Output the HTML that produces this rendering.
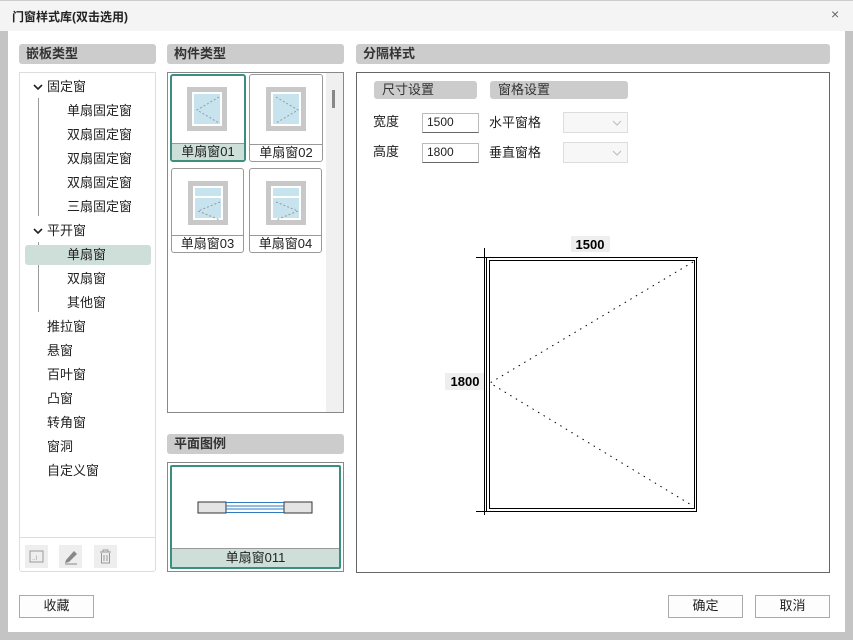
<!DOCTYPE html>
<html><head><meta charset="utf-8"><style>
*{margin:0;padding:0;box-sizing:border-box}
body{width:853px;height:640px;position:relative;background:#c4c4c4;font-family:"Liberation Sans","Noto Sans CJK SC",sans-serif;font-size:13px;color:#222;overflow:hidden}
.a{position:absolute}
.hd{position:absolute;background:#ccc;border-radius:3px;font-weight:bold;font-size:13px;padding-left:7px;line-height:20px;color:#333}
.tr{position:absolute;font-size:13px;line-height:16px;color:#222}
.item{position:absolute;border:1px solid #999;border-radius:3px;background:#fff}
.fr{position:absolute;left:16px;top:12px;width:40px;height:44px;background:#c8c8c8;padding:5px}
.fr i{display:block;width:100%;height:100%;border:2px solid #fff;background:#c7e4ee}
.lb{position:absolute;left:0;right:0;bottom:0;height:17px;border-top:1px solid #999;text-align:center;font-size:13px;line-height:16px}
.btn{position:absolute;border:1px solid #aaa;background:#fdfdfd;text-align:center;line-height:20px;font-size:13px}
.in{position:absolute;border:1px solid #bbb;border-bottom:1px solid #666;background:#fff;font-size:12px;line-height:17px;padding-left:4px}
.dd{position:absolute;border:1px solid #ddd;background:#f7f7f7}
.ic{position:absolute;width:23px;height:23px;background:#eee;top:545px}
</style></head><body>
<div class="a" style="left:0;top:0;width:853px;height:31px;background:#f4f4f4;border-top:1px solid #ccc"></div>
<div class="a" style="left:12px;top:8px;font-size:12px;font-weight:bold;color:#222">门窗样式库(双击选用)</div>
<div class="a" style="left:831px;top:6px;font-size:14px;color:#666">×</div>
<div class="a" style="left:8px;top:31px;width:837px;height:601px;background:#fff"></div>

<div class="hd" style="left:19px;top:44px;width:137px">嵌板类型</div>
<div class="hd" style="left:167px;top:44px;width:177px">构件类型</div>
<div class="hd" style="left:356px;top:44px;width:474px">分隔样式</div>

<div class="a" style="left:19px;top:72px;width:137px;height:466px;border:1px solid #ddd;border-bottom:none"></div>
<div class="a" style="left:19px;top:537px;width:137px;height:35px;border:1px solid #ddd;border-radius:0 0 3px 3px"></div>
<div class="ic" style="left:25px"><svg width="23" height="23"><rect x="5" y="6" width="13" height="11" fill="none" stroke="#999"/><text x="7" y="15" font-size="6" fill="#999">..I</text></svg></div>
<div class="ic" style="left:59px"><svg width="23" height="23"><path d="M7 15 L15 6 L18 9 L10 17 L6 18Z" fill="#888"/><line x1="6" y1="19" x2="18" y2="19" stroke="#888"/></svg></div>
<div class="ic" style="left:94px"><svg width="23" height="23" fill="none" stroke="#999"><path d="M6 7h11M9 7V5h5v2M7.5 8v10h8V8M10 10v6M13 10v6"/></svg></div>

<div class="a" style="left:38px;top:98px;width:1px;height:118px;background:#999"></div>
<div class="a" style="left:38px;top:242px;width:1px;height:70px;background:#999"></div>
<div class="a" style="left:25px;top:245px;width:126px;height:20px;background:#cddfd8;border-radius:3px"></div>
<svg class="a" style="left:33px;top:83px" width="10" height="8"><path d="M1 2l4 4 4-4" fill="none" stroke="#222" stroke-width="1.6"/></svg>
<svg class="a" style="left:33px;top:227px" width="10" height="8"><path d="M1 2l4 4 4-4" fill="none" stroke="#222" stroke-width="1.6"/></svg>
<div class="tr" style="left:47px;top:79px">固定窗</div>
<div class="tr" style="left:67px;top:103px">单扇固定窗</div>
<div class="tr" style="left:67px;top:127px">双扇固定窗</div>
<div class="tr" style="left:67px;top:151px">双扇固定窗</div>
<div class="tr" style="left:67px;top:175px">双扇固定窗</div>
<div class="tr" style="left:67px;top:199px">三扇固定窗</div>
<div class="tr" style="left:47px;top:223px">平开窗</div>
<div class="tr" style="left:67px;top:247px">单扇窗</div>
<div class="tr" style="left:67px;top:271px">双扇窗</div>
<div class="tr" style="left:67px;top:295px">其他窗</div>
<div class="tr" style="left:47px;top:319px">推拉窗</div>
<div class="tr" style="left:47px;top:343px">悬窗</div>
<div class="tr" style="left:47px;top:367px">百叶窗</div>
<div class="tr" style="left:47px;top:391px">凸窗</div>
<div class="tr" style="left:47px;top:415px">转角窗</div>
<div class="tr" style="left:47px;top:439px">窗洞</div>
<div class="tr" style="left:47px;top:463px">自定义窗</div>

<div class="a" style="left:167px;top:72px;width:177px;height:341px;border:1px solid #888"></div>
<div class="a" style="left:326px;top:73px;width:17px;height:339px;background:#f0f0f0"></div>
<div class="a" style="left:332px;top:90px;width:3px;height:18px;background:#888"></div>

<div class="item" style="left:170px;top:74px;width:76px;height:88px;border:2px solid #3a8f7e"><div class="fr" style="left:15px;top:11px"><i></i></div><svg class="a" style="left:22px;top:18px" width="28" height="32"><path d="M25 3L3 16L25 29" fill="none" stroke="#999" stroke-dasharray="2 2"/></svg><div class="lb" style="background:#cddfd8">单扇窗01</div></div>
<div class="item" style="left:249px;top:74px;width:74px;height:88px"><div class="fr"><i></i></div><svg class="a" style="left:23px;top:19px" width="28" height="32"><path d="M3 3L25 16L3 29" fill="none" stroke="#999" stroke-dasharray="2 2"/></svg><div class="lb">单扇窗02</div></div>
<div class="item" style="left:171px;top:168px;width:73px;height:85px"><div class="fr"><i style="background:linear-gradient(#c7e4ee 0 8px,#fff 8px 10px,#c7e4ee 10px)"></i></div><svg class="a" style="left:23px;top:31px" width="28" height="22"><path d="M25 2L3 11L25 20" fill="none" stroke="#999" stroke-dasharray="2 2"/></svg><div class="lb">单扇窗03</div></div>
<div class="item" style="left:249px;top:168px;width:73px;height:85px"><div class="fr"><i style="background:linear-gradient(#c7e4ee 0 8px,#fff 8px 10px,#c7e4ee 10px)"></i></div><svg class="a" style="left:23px;top:31px" width="28" height="22"><path d="M3 2L25 11L3 20" fill="none" stroke="#999" stroke-dasharray="2 2"/></svg><div class="lb">单扇窗04</div></div>

<div class="hd" style="left:167px;top:434px;width:177px">平面图例</div>
<div class="a" style="left:167px;top:462px;width:177px;height:110px;border:1px solid #888"></div>
<div class="a" style="left:170px;top:465px;width:171px;height:104px;border:2px solid #3a8f7e;border-radius:2px;overflow:hidden"><div class="a" style="left:0;right:0;bottom:0;height:19px;background:#cddfd8;border-top:1px solid #999;text-align:center;line-height:18px">单扇窗011</div></div>
<svg class="a" style="left:197px;top:501px" width="118" height="14"><rect x="1" y="1" width="28" height="11" fill="#e4e4e4" stroke="#333"/><rect x="87" y="1" width="28" height="11" fill="#e4e4e4" stroke="#333"/><path d="M29 1.5H87M29 5H87M29 8H87M29 11.5H87" stroke="#2e7bc0"/></svg>

<div class="a" style="left:356px;top:72px;width:474px;height:501px;border:1px solid #666"></div>
<div class="hd" style="left:374px;top:81px;width:103px;height:18px;line-height:18px;font-weight:normal;padding-left:8px">尺寸设置</div>
<div class="hd" style="left:490px;top:81px;width:138px;height:18px;line-height:18px;font-weight:normal;padding-left:8px">窗格设置</div>
<div class="tr" style="left:373px;top:114px">宽度</div>
<div class="tr" style="left:373px;top:144px">高度</div>
<div class="in" style="left:422px;top:113px;width:57px;height:20px">1500</div>
<div class="in" style="left:422px;top:143px;width:57px;height:20px">1800</div>
<div class="tr" style="left:489px;top:115px">水平窗格</div>
<div class="tr" style="left:489px;top:145px">垂直窗格</div>
<div class="dd" style="left:563px;top:112px;width:65px;height:21px"></div>
<div class="dd" style="left:563px;top:142px;width:65px;height:21px"></div>
<svg class="a" style="left:612px;top:118px" width="10" height="40" fill="none" stroke="#bbb"><path d="M1 3l4 4 4-4M1 33l4 4 4-4"/></svg>

<svg class="a" style="left:440px;top:230px" width="270" height="290">
<rect x="46.5" y="27.5" width="210" height="254" fill="none" stroke="#000"/>
<rect x="49.5" y="30.5" width="205" height="248" fill="none" stroke="#000"/>
<line x1="44.5" y1="18" x2="44.5" y2="285" stroke="#000"/>
<line x1="36" y1="27.5" x2="258" y2="27.5" stroke="#000"/>
<line x1="36" y1="281.5" x2="60" y2="281.5" stroke="#000"/>
<path d="M253 32L50 153L253 276" fill="none" stroke="#000" stroke-dasharray="1.5 5"/>
<rect x="131" y="6" width="39" height="16" fill="#eee"/>
<text x="150" y="19" font-size="13" font-weight="bold" text-anchor="middle" font-family="Liberation Sans">1500</text>
<rect x="5" y="143" width="39" height="17" fill="#eee"/>
<text x="25" y="156" font-size="13" font-weight="bold" text-anchor="middle" font-family="Liberation Sans">1800</text>
</svg>

<div class="btn" style="left:19px;top:595px;width:75px;height:23px">收藏</div>
<div class="btn" style="left:668px;top:595px;width:75px;height:23px">确定</div>
<div class="btn" style="left:755px;top:595px;width:75px;height:23px">取消</div>
</body></html>
